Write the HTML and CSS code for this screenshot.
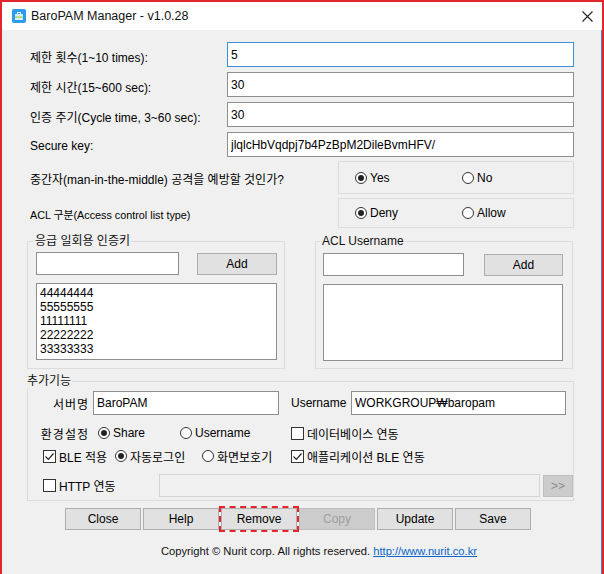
FILE: index.html
```html
<!DOCTYPE html>
<html lang="ko">
<head>
  <meta charset="UTF-8">
  <title>BaroPAM Manager</title>
  <link rel="stylesheet" href="styles.css">
</head>
<body>

<div class="window">
  <div class="titlebar">
    <svg class="app-icon" width="14" height="14" viewBox="0 0 14 14">
      <rect width="14" height="14" rx="2" fill="#2d9cf0"/>
      <rect x="5.5" y="3.5" width="3" height="2" fill="none" stroke="#d6eeff" stroke-width="1"/>
      <rect x="3" y="5" width="8" height="6" fill="#d6eeff"/>
      <rect x="3" y="7.5" width="8" height="1.2" fill="#a4d13c"/>
    </svg>
    <span class="title">BaroPAM Manager - v1.0.28</span>
    <svg class="close" width="11" height="11" viewBox="0 0 11 11">
      <path d="M0.5 0.5 L10.5 10.5 M10.5 0.5 L0.5 10.5" stroke="#222" stroke-width="1.1"/>
    </svg>
  </div>

  <div class="client">

    <div class="fields">
      <label>제한 횟수(1~10 times):</label>
      <input class="textbox focus" value="5">
      <label>제한 시간(15~600 sec):</label>
      <input class="textbox" value="30">
      <label>인증 주기(Cycle time, 3~60 sec):</label>
      <input class="textbox" value="30">
      <label>Secure key:</label>
      <input class="textbox" value="jlqlcHbVqdpj7b4PzBpM2DileBvmHFV/">
    </div>

    <div class="option-row">
      <span class="option-label">중간자(man-in-the-middle) 공격을 예방할 것인가?</span>
      <div class="choice-box">
        <span class="choice"><span class="radio on"></span>Yes</span>
        <span class="choice"><span class="radio"></span>No</span>
      </div>
    </div>

    <div class="option-row">
      <span class="option-label narrow">ACL 구분(Access control list type)</span>
      <div class="choice-box short">
        <span class="choice"><span class="radio on"></span>Deny</span>
        <span class="choice"><span class="radio"></span>Allow</span>
      </div>
    </div>

    <div class="groups">
      <fieldset class="group">
        <legend>응급 일회용 인증키</legend>
        <div class="add-row">
          <input class="textbox key-input">
          <button class="btn add">Add</button>
        </div>
        <div class="listbox">
          <div>44444444</div>
          <div>55555555</div>
          <div>11111111</div>
          <div>22222222</div>
          <div>33333333</div>
        </div>
      </fieldset>

      <fieldset class="group acl">
        <legend>ACL Username</legend>
        <div class="add-row">
          <input class="textbox key-input">
          <button class="btn add">Add</button>
        </div>
        <div class="listbox"></div>
      </fieldset>
    </div>

    <fieldset class="extra">
      <legend>추가기능</legend>

      <div class="extra-row first">
        <span class="cell-label">서버명</span>
        <input class="textbox server" value="BaroPAM">
        <span class="user-label">Username</span>
        <input class="textbox user" value="WORKGROUP&#8361;baropam">
      </div>

      <div class="extra-row">
        <span class="cell-label">환경설정</span>
        <span class="choice w-share"><span class="radio on"></span>Share</span>
        <span class="choice w-user"><span class="radio"></span>Username</span>
        <span class="choice"><span class="check"></span>데이터베이스 연동</span>
      </div>

      <div class="extra-row">
        <span class="choice w-ble"><span class="check on"><svg width="11" height="11" viewBox="0 0 11 11"><path d="M1.5 5.5 L4.3 8.3 L9.5 2.5" fill="none" stroke="#222" stroke-width="1.2"/></svg></span>BLE 적용</span>
        <span class="choice w-auto"><span class="radio on"></span>자동로그인</span>
        <span class="choice w-saver"><span class="radio"></span>화면보호기</span>
        <span class="choice"><span class="check on"><svg width="11" height="11" viewBox="0 0 11 11"><path d="M1.5 5.5 L4.3 8.3 L9.5 2.5" fill="none" stroke="#222" stroke-width="1.2"/></svg></span>애플리케이션 BLE 연동</span>
      </div>

      <div class="extra-row last">
        <span class="choice w-http"><span class="check"></span>HTTP 연동</span>
        <input class="textbox http" disabled>
        <button class="btn more" disabled>&gt;&gt;</button>
      </div>
    </fieldset>

    <div class="buttons">
      <button class="btn">Close</button>
      <button class="btn">Help</button>
      <button class="btn marked">Remove</button>
      <button class="btn" disabled>Copy</button>
      <button class="btn">Update</button>
      <button class="btn">Save</button>
    </div>

    <div class="copyright">
      Copyright &copy; Nurit corp. All rights reserved. <a href="#">http://www.nurit.co.kr</a>
    </div>

  </div>
</div>

</body>
</html>
```

FILE: styles.css
```css
body {
  margin: 0;
  font-family: "Liberation Sans", "Noto Sans CJK KR", sans-serif;
  font-size: 12px;
  color: #000;
  background-color: #ffffff;
}

.window {
  width: 604px;
  height: 574px;
  box-sizing: border-box;
  border: 2px solid #e3262b;
  border-bottom: 0;
  box-shadow: inset -1px 0 0 #4f7fae;
  background-color: #f0f0f0;
  overflow: hidden;
}

.titlebar {
  height: 28px;
  display: flex;
  align-items: center;
  padding: 0 9px 0 10px;
  background-color: #ffffff;
}

.title {
  margin-left: 5px;
  font-size: 12.5px;
  color: #111;
}

.close {
  margin-left: auto;
}

.client {
  padding: 12px 0 0 25px;
}

/* top four settings */
.fields {
  display: grid;
  grid-template-columns: 197px 347px;
  grid-auto-rows: 25px;
  row-gap: 5px;
  margin-left: 3px;
  align-items: center;
}

.fields label {
  padding-top: 3px;
}

.textbox {
  box-sizing: border-box;
  height: 25px;
  margin: 0;
  padding: 0 3px;
  border: 1px solid #8e8e8e;
  background-color: #ffffff;
  font: inherit;
  color: #000;
  outline: none;
}

.textbox.focus {
  border-color: #3d8fd9;
}

.option-row {
  display: flex;
  align-items: center;
  margin: 4px 0 0 3px;
}

.option-label {
  width: 308px;
  padding-top: 2px;
}

.option-label.narrow {
  font-size: 10.8px;
}

.choice-box {
  box-sizing: border-box;
  width: 236px;
  height: 33px;
  display: flex;
  align-items: center;
  padding-left: 16px;
  border: 1px solid #dcdcdc;
}

.choice-box.short {
  height: 30px;
}

.choice {
  display: inline-flex;
  align-items: center;
  gap: 3px;
  white-space: nowrap;
}

.choice-box .choice {
  width: 107px;
}

.radio {
  box-sizing: border-box;
  width: 12px;
  height: 12px;
  border: 1px solid #333;
  border-radius: 50%;
  background-color: #ffffff;
  display: flex;
  align-items: center;
  justify-content: center;
}

.radio.on::after {
  content: '';
  width: 6px;
  height: 6px;
  border-radius: 50%;
  background-color: #222;
}

.check {
  box-sizing: border-box;
  width: 13px;
  height: 13px;
  border: 1px solid #333;
  background-color: #ffffff;
  display: flex;
  align-items: center;
  justify-content: center;
}

/* group boxes */
fieldset {
  margin: 0;
  min-width: 0;
  box-sizing: border-box;
  border: 1px solid #dcdcdc;
}

legend {
  padding: 0 1px;
  margin-left: -2px;
  line-height: 14px;
  color: #111;
}

.groups {
  display: flex;
  gap: 30px;
  margin-top: 6px;
}

.group {
  width: 258px;
  padding: 4px 7px 7px 8px;
}

.group.acl {
  padding: 5px 9px 7px 7px;
}

.add-row {
  display: flex;
  align-items: flex-start;
  justify-content: space-between;
}

.key-input {
  width: 143px;
  height: 23px;
}

.acl .key-input {
  width: 141px;
}

.btn {
  box-sizing: border-box;
  width: 76px;
  height: 22px;
  margin: 0;
  padding: 0;
  border: 1px solid #adadad;
  background-color: #e1e1e1;
  font: inherit;
  color: #000;
}

.btn:disabled {
  background-color: #cccccc;
  border-color: #bfbfbf;
  color: #a0a0a0;
}

.btn.add {
  width: 80px;
  margin-top: 1px;
}

.acl .btn.add {
  width: 79px;
}

.listbox {
  box-sizing: border-box;
  height: 77px;
  margin-top: 8px;
  padding: 2px 3px;
  border: 1px solid #8e8e8e;
  background-color: #ffffff;
  line-height: 14px;
}

/* 추가기능 */
.extra {
  width: 547px;
  margin-top: 5px;
  padding: 3px 0 3px 0;
}

.extra-row {
  display: flex;
  align-items: center;
  height: 16px;
  margin-top: 7px;
}

.extra-row.first {
  height: 24px;
  margin-top: 0;
}

.extra-row.first + .extra-row {
  margin-top: 10px;
}

.extra-row.last {
  height: 23px;
  margin-top: 10px;
}

.cell-label {
  width: 61px;
  text-align: right;
  letter-spacing: 1px;
}

.extra-row .cell-label + .choice {
  margin-left: 9px;
}

.textbox.server {
  width: 186px;
  height: 24px;
  margin-left: 4px;
}

.user-label {
  width: 60px;
  margin-left: 12px;
}

.textbox.user {
  width: 215px;
  height: 24px;
}

.w-share { width: 82px; }
.w-user { width: 111px; }
.w-ble { width: 72px; margin-left: 15px; }
.w-auto { width: 87px; }
.w-saver { width: 89px; }
.w-http { width: 116px; margin-left: 15px; }

.textbox.http {
  width: 381px;
  height: 23px;
  border-color: #d4d4d4;
  background-color: #f0f0f0;
}

.btn.more {
  width: 30px;
  margin-left: 3px;
  color: #8a8a8a;
}

/* bottom buttons */
.buttons {
  display: flex;
  gap: 2px;
  margin: 7px 0 0 38px;
}

.btn.marked {
  outline: 2px dashed #e3262b;
  outline-offset: 0;
}

.copyright {
  margin: 14px 0 0 134px;
  font-size: 11.2px;
  line-height: 14px;
  color: #111;
}

.copyright a {
  color: #0a66c8;
}
```
